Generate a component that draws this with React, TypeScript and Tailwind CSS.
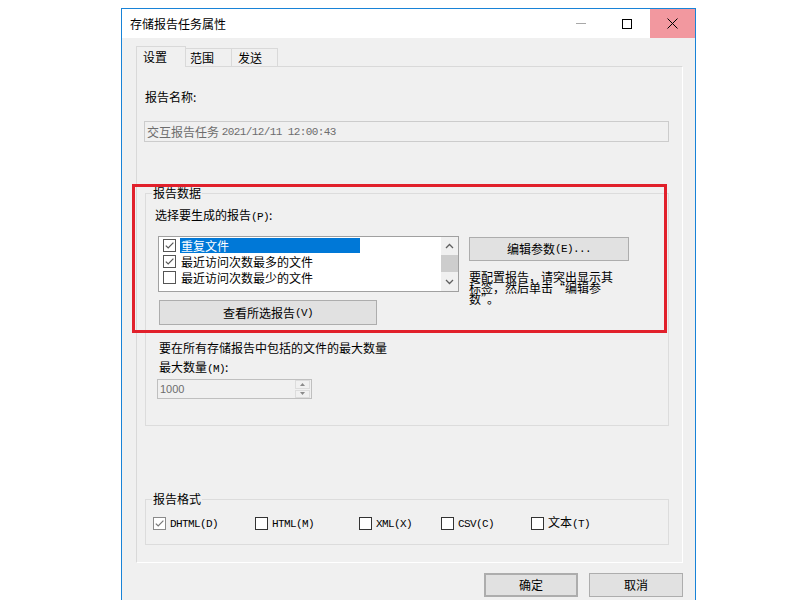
import type { ReactNode } from "react";

const cjk = "font-['Noto_Sans_CJK_SC',sans-serif]";

// SimSun-like narrow ASCII
const M = ({ children }: { children: ReactNode }) => (
  <span className="font-['Liberation_Mono',monospace] text-[11px] tracking-[-0.6px]">
    {children}
  </span>
);

type BoxProps = { checked?: boolean; tone?: string; mark?: string };

const Box = ({ checked, tone = "border-[#333333]", mark = "#333333" }: BoxProps) => (
  <span
    className={`w-[13px] h-[13px] border ${tone} bg-white flex items-center justify-center shrink-0`}
  >
    {checked && (
      <svg width="11" height="11" viewBox="0 0 11 11">
        <path d="M1.8 5.6 L4.2 8 L9.4 2.6" fill="none" stroke={mark} strokeWidth="1.2" />
      </svg>
    )}
  </span>
);

const Btn = ({ className, children }: { className: string; children: ReactNode }) => (
  <div
    className={`bg-[#e1e1e1] border border-[#adadad] flex items-center justify-center leading-[16px] ${className}`}
  >
    {children}
  </div>
);

const formats = [
  { label: <M>DHTML(D)</M>, w: "w-[102px]", checked: true },
  { label: <M>HTML(M)</M>, w: "w-[104px]" },
  { label: <M>XML(X)</M>, w: "w-[82px]" },
  { label: <M>CSV(C)</M>, w: "w-[90px]" },
  {
    label: (
      <span>
        文本<M>(T)</M>
      </span>
    ),
    w: "w-[80px]",
  },
];

const reports = [
  { name: "重复文件", checked: true, selected: true },
  { name: "最近访问次数最多的文件", checked: true },
  { name: "最近访问次数最少的文件", checked: false },
];

export default function App() {
  return (
    <div className={`w-[800px] h-[600px] bg-white overflow-hidden relative text-[12px] text-black ${cjk}`}>
      <div className="ml-[121px] mt-[8px] w-[575px] h-[600px] border border-[#1883d7] bg-[#f0f0f0] flex flex-col">
        {/* title bar */}
        <div className="h-[29px] bg-white flex items-stretch shrink-0">
          <div className="pl-[8px] flex items-center leading-[16px]">存储报告任务属性</div>
          <div className="flex-1" />
          <div className="w-[46px] flex items-center justify-center">
            <div className="w-[10px] h-px bg-[#a8a8a8]" />
          </div>
          <div className="w-[46px] flex items-center justify-center">
            <div className="w-[10px] h-[10px] border border-black" />
          </div>
          <div className="w-[45px] bg-[#f2989f] flex items-center justify-center">
            <svg width="11" height="11" viewBox="0 0 11 11">
              <path d="M0.5 0.5 L10.5 10.5 M10.5 0.5 L0.5 10.5" stroke="#000" strokeWidth="1" />
            </svg>
          </div>
        </div>

        <div className="pl-[14px] pr-[12px]">
          {/* tabs */}
          <div className="mt-[8px] flex items-end h-[21px] -mb-px relative z-10">
            <div className="w-[50px] h-[21px] border border-b-0 border-[#d9d9d9] bg-[#f0f0f0] pl-[6px] pt-[2px] leading-[16px]">
              设置
            </div>
            <div className="w-[46px] h-[19px] border border-l-0 border-[#d9d9d9] border-b-0 pl-[4px] pt-[1px] leading-[16px]">
              范围
            </div>
            <div className="w-[46px] h-[19px] border border-l-0 border-[#d9d9d9] border-b-0 pl-[6px] pt-[1px] leading-[16px]">
              发送
            </div>
          </div>

          {/* tab panel */}
          <div className="h-[497px] border border-[#d9d9d9] border-r-white border-b-white flex flex-col">
            <div className="mt-[22px] ml-[8px] leading-[16px]">报告名称:</div>
            <div className="mt-[16px] ml-[7px] w-[525px] h-[21px] border border-[#cccccc] flex items-center pl-[2px] text-[#6d6d6d] leading-[16px]">
              交互报告任务&nbsp;<M>2021/12/11 12:00:43</M>
            </div>

            {/* report data group */}
            <fieldset className="mt-[43px] ml-[8px] w-[524px] h-[241px] border border-[#dcdcdc]">
              <legend className="ml-[6px] px-[1px] leading-[16px]">报告数据</legend>
              <div className="mt-[6px] ml-[9px] leading-[16px]">
                选择要生成的报告<M>(P)</M>:
              </div>
              <div className="mt-[11px] flex">
                <div className="ml-[12px] flex flex-col">
                  <div className="w-[301px] h-[56px] border border-[#a0a0a0] bg-white flex">
                    <div className="flex-1 pl-[4px]">
                      {reports.map((r) => (
                        <div key={r.name} className="h-[16px] flex items-center">
                          <Box checked={r.checked} tone="border-[#555555]" mark="#555555" />
                          <span
                            className={`ml-[4px] h-[15px] leading-[15px] pl-px ${
                              r.selected ? "w-[180px] bg-[#0078d7] text-white" : ""
                            }`}
                          >
                            {r.name}
                          </span>
                        </div>
                      ))}
                    </div>
                    <div className="w-[17px] bg-[#f0f0f0] flex flex-col">
                      <div className="h-[18px] flex items-center justify-center">
                        <svg width="9" height="6" viewBox="0 0 9 6">
                          <path d="M1 5 L4.5 1.5 L8 5" fill="none" stroke="#606060" strokeWidth="1.3" />
                        </svg>
                      </div>
                      <div className="h-[17px] bg-[#cdcdcd]" />
                      <div className="flex-1 flex items-center justify-center">
                        <svg width="9" height="6" viewBox="0 0 9 6">
                          <path d="M1 1 L4.5 4.5 L8 1" fill="none" stroke="#606060" strokeWidth="1.3" />
                        </svg>
                      </div>
                    </div>
                  </div>
                  <Btn className="mt-[8px] ml-[1px] w-[218px] h-[25px]">
                    查看所选报告<M>(V)</M>
                  </Btn>
                </div>
                <div className="ml-[10px] flex flex-col">
                  <Btn className="mt-[1px] w-[160px] h-[24px]">
                    编辑参数<M>(E)...</M>
                  </Btn>
                  <div className="mt-[10px] w-[150px] leading-[11px]">
                    要配置报告，请突出显示其
                    <br />
                    标签，然后单击“编辑参
                    <br />
                    数”。
                  </div>
                </div>
              </div>
              <div className="mt-[15px] ml-[13px] leading-[16px]">
                要在所有存储报告中包括的文件的最大数量
              </div>
              <div className="mt-[3px] ml-[13px] leading-[16px]">
                最大数量<M>(M)</M>:
              </div>
              <div className="mt-[2px] ml-[11px] w-[155px] h-[20px] border border-[#bfbfbf] flex items-center">
                <span className="pl-[2px] flex-1 font-['Liberation_Sans',sans-serif] text-[11px] text-[#6d6d6d]">
                  1000
                </span>
                <div className="w-[15px] h-[18px] mr-px flex flex-col gap-px">
                  <div className="flex-1 border border-[#dcdcdc] flex items-center justify-center">
                    <svg width="5" height="3" viewBox="0 0 5 3">
                      <path d="M0 3 L2.5 0 L5 3 Z" fill="#8a8a8a" />
                    </svg>
                  </div>
                  <div className="flex-1 border border-[#dcdcdc] flex items-center justify-center">
                    <svg width="5" height="3" viewBox="0 0 5 3">
                      <path d="M0 0 L2.5 3 L5 0 Z" fill="#8a8a8a" />
                    </svg>
                  </div>
                </div>
              </div>
            </fieldset>

            {/* format group */}
            <fieldset className="mt-[65px] ml-[8px] w-[524px] h-[54px] border border-[#dcdcdc]">
              <legend className="ml-[6px] px-[1px] leading-[16px]">报告格式</legend>
              <div className="mt-[8px] ml-[7px] flex h-[16px]">
                {formats.map((f, i) => (
                  <div key={i} className={`${f.w} flex items-center gap-[4px]`}>
                    {f.checked ? (
                      <Box checked tone="border-[#8a8a8a]" mark="#777777" />
                    ) : (
                      <Box />
                    )}
                    <span className="leading-[16px]">{f.label}</span>
                  </div>
                ))}
              </div>
            </fieldset>
          </div>

          {/* dialog buttons */}
          <div className="mt-[10px] flex justify-end gap-[11px]">
            <Btn className="w-[94px] h-[24px] border-2 border-[#0078d7]">确定</Btn>
            <Btn className="w-[94px] h-[24px]">取消</Btn>
          </div>
        </div>
      </div>

      {/* annotation */}
      <div className="absolute left-[132px] top-[184px] w-[535px] h-[149px] border-[3px] border-[#e1202b]" />
    </div>
  );
}
